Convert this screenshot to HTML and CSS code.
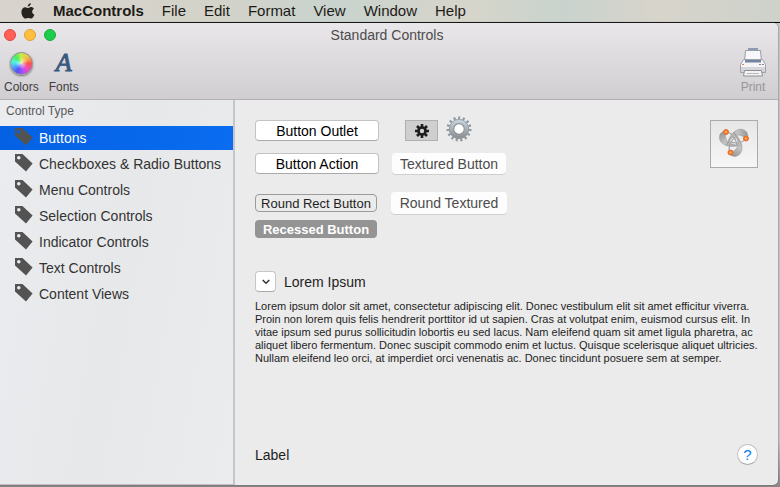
FILE: index.html
```html
<!DOCTYPE html>
<html lang="en">
<head>
    <meta charset="UTF-8">
    <meta name="viewport" content="width=device-width, initial-scale=1.0">
    <title>Standard Controls</title>
    <link rel="stylesheet" href="styles.css">
</head>
<body>
    <svg class="defs" width="0" height="0">
        <symbol id="tag" viewBox="0 0 18 18">
            <path fill-rule="evenodd" d="M0 0h7.5L17.6 9.6 11 17.6 0 7.6zM3.8 2a1.8 1.8 0 1 0 0 3.6 1.8 1.8 0 0 0 0-3.6z"/>
        </symbol>
    </svg>

    <nav class="menubar">
        <svg class="apple" width="14" height="16" viewBox="0 0 14 16">
            <path d="M9.8 0c.1 1.9-1.300 3.500-3 3.600C6.600 1.900 8.200.2 9.800 0zM9.900 4.100c1.300 0 2.400.7 3 1.600-2.500 1.500-2.100 4.900.5 5.900-.7 1.900-1.900 4-3.300 4-1.100 0-1.500-.7-2.800-.7s-1.800.7-2.800.7C2.500 15.600.4 12.200.4 9c0-3.100 1.900-4.800 3.900-4.800 1.200 0 2.200.8 3 .8.700 0 1.600-.9 2.600-.9z"/>
        </svg>
        <a class="menu app" href="#">MacControls</a>
        <a class="menu" href="#">File</a>
        <a class="menu" href="#">Edit</a>
        <a class="menu" href="#">Format</a>
        <a class="menu" href="#">View</a>
        <a class="menu" href="#">Window</a>
        <a class="menu" href="#">Help</a>
    </nav>

    <div class="window">
        <header class="toolbar">
            <div class="titlebar">
                <div class="lights">
                    <button class="light close" aria-label="Close"></button>
                    <button class="light minimize" aria-label="Minimize"></button>
                    <button class="light zoom" aria-label="Zoom"></button>
                </div>
                <h1>Standard Controls</h1>
            </div>
            <div class="tools">
                <button class="tool">
                    <span class="tool-icon"><span class="wheel"></span></span>
                    Colors
                </button>
                <button class="tool">
                    <span class="tool-icon letter">A</span>
                    Fonts
                </button>
                <button class="tool print" disabled>
                    <svg class="tool-icon" width="28" height="30" viewBox="0 0 28 30">
                        <path fill="#8d9cb3" d="M9 0h10v3H9z"/>
                        <path fill="#f7f8fb" stroke="#9a9ca4" d="M6.500 2.500h15l1 11h-17z"/>
                        <path fill="#f4f4f7" stroke="#a0a1a8" d="M4.500 11.500h19l3 5v8h-25v-8z"/>
                        <path fill="#7483a1" d="M6 12h16v2.500H6z"/>
                        <path fill="#d4d5da" d="M2 19h24v5H2z"/>
                        <path fill="#f3f3f6" stroke="#8f9097" d="M5.500 22.500h17l1 5.500h-19z"/>
                        <path stroke="#b8b9bf" d="M8 25.500h12"/>
                        <path stroke="#e07b66" d="M3 16.500h2"/>
                        <path stroke="#85868c" d="M20 16.500h5" stroke-dasharray="2 1"/>
                    </svg>
                    Print
                </button>
            </div>
        </header>

        <div class="body">
            <aside class="sidebar">
                <h2>Control Type</h2>
                <ul>
                    <li><a class="item selected" href="#"><svg class="tag"><use href="#tag"/></svg>Buttons</a></li>
                    <li><a class="item" href="#"><svg class="tag"><use href="#tag"/></svg>Checkboxes &amp; Radio Buttons</a></li>
                    <li><a class="item" href="#"><svg class="tag"><use href="#tag"/></svg>Menu Controls</a></li>
                    <li><a class="item" href="#"><svg class="tag"><use href="#tag"/></svg>Selection Controls</a></li>
                    <li><a class="item" href="#"><svg class="tag"><use href="#tag"/></svg>Indicator Controls</a></li>
                    <li><a class="item" href="#"><svg class="tag"><use href="#tag"/></svg>Text Controls</a></li>
                    <li><a class="item" href="#"><svg class="tag"><use href="#tag"/></svg>Content Views</a></li>
                </ul>
            </aside>

            <main class="content">
                <div class="top">
                    <div class="column">
                        <button class="push">Button Outlet</button>
                        <button class="push">Button Action</button>
                        <div class="small-buttons">
                            <button class="round-rect">Round Rect Button</button>
                            <button class="recessed">Recessed Button</button>
                        </div>
                    </div>
                    <div class="column second">
                        <div class="gears">
                            <button class="gradient" aria-label="Action">
                                <svg width="14" height="14" viewBox="-7 -7 14 14">
                                    <circle r="3.500" fill="none" stroke="#1c1c1c" stroke-width="2.600"/>
                                    <path stroke="#1c1c1c" stroke-width="2.600" d="M0-7v3M0 7V4M-7 0h3M7 0H4M-5-5l2 2M5 5L3 3M-5 5l2-2M5-5L3-3"/>
                                </svg>
                            </button>
                            <button class="image-button" aria-label="Settings">
                                <svg width="26" height="26" viewBox="-13 -13 26 26">
                                    <defs>
                                        <linearGradient id="steel" x1="0" y1="0" x2="0" y2="1">
                                            <stop offset="0" stop-color="#c3d0d8"/>
                                            <stop offset="1" stop-color="#909398"/>
                                        </linearGradient>
                                    </defs>
                                    <circle r="11" fill="none" stroke="#8d979e" stroke-width="3" stroke-dasharray="2 2.607"/>
                                    <circle r="7.500" fill="none" stroke="url(#steel)" stroke-width="5"/>
                                    <circle r="9.700" fill="none" stroke="#8d979e" stroke-width=".8"/>
                                    <circle r="5.300" fill="#fff" stroke="#8f959a" stroke-width="1.200"/>
                                </svg>
                            </button>
                        </div>
                        <button class="textured">Textured Button</button>
                        <button class="textured round">Round Textured</button>
                    </div>
                    <div class="well">
                        <svg width="32" height="32" viewBox="0 0 32 32">
                            <defs>
                                <linearGradient id="ring" x1="0" y1="0" x2="1" y2="1">
                                    <stop offset="0" stop-color="#8c8c8c"/>
                                    <stop offset=".5" stop-color="#c4c4c4"/>
                                    <stop offset="1" stop-color="#9c9c9c"/>
                                </linearGradient>
                                <g id="loop">
                                    <path fill="url(#ring)" stroke="#9b9b9b" stroke-width=".5" d="M8 3C1 3 0 10 3 14c3 4 11 6 21 3-10 .5-15.500-2-16-7C6.700 7 8 6 10 5z"/>
                                    <path fill="none" stroke="#a3a3a3" stroke-width="1.200" d="M8 4c5 0 9.500 5 11 13"/>
                                </g>
                            </defs>
                            <use href="#loop"/>
                            <use href="#loop" transform="rotate(120 16 13)"/>
                            <use href="#loop" transform="rotate(240 16 13)"/>
                            <g fill="#f47a2c" stroke="#e66b36">
                                <circle cx="8" cy="4" r="2.500"/>
                                <circle cx="28" cy="10.500" r="2.500"/>
                                <circle cx="12.500" cy="24.500" r="2.500"/>
                            </g>
                            <g fill="#ffc23c">
                                <circle cx="8" cy="4" r="1"/>
                                <circle cx="28" cy="10.500" r="1"/>
                                <circle cx="12.500" cy="24.500" r="1"/>
                            </g>
                        </svg>
                    </div>
                </div>

                <div class="disclosure">
                    <button class="disclose" id="disclose" aria-labelledby="lorem">
                        <svg width="8" height="6" viewBox="0 0 8 6"><path fill="none" stroke="#333" stroke-width="1.500" d="M.7 1L4 4.300 7.300 1"/></svg>
                    </button>
                    <label id="lorem" for="disclose">Lorem Ipsum</label>
                </div>
                <p class="lorem">Lorem ipsum dolor sit amet, consectetur adipiscing elit. Donec vestibulum elit sit amet efficitur viverra.<br>
                Proin non lorem quis felis hendrerit porttitor id ut sapien. Cras at volutpat enim, euismod cursus elit. In<br>
                vitae ipsum sed purus sollicitudin lobortis eu sed lacus. Nam eleifend quam sit amet ligula pharetra, ac<br>
                aliquet libero fermentum. Donec suscipit commodo enim et luctus. Quisque scelerisque aliquet ultricies.<br>
                Nullam eleifend leo orci, at imperdiet orci venenatis ac. Donec tincidunt posuere sem at semper.</p>

                <footer class="bottom">
                    <span>Label</span>
                    <button class="help">?</button>
                </footer>
            </main>
        </div>
    </div>
</body>
</html>
```
FILE: styles.css
```css
* {
    box-sizing: border-box;
}
body {
    display: flex;
    flex-direction: column;
    min-height: 100vh;
    margin: 0;
    background: linear-gradient(#c9c9c9 0, #c9c9c9 90%, #8a8789 100%);
    font-family: "Liberation Sans", Arial, sans-serif;
    font-size: 14px;
    color: #1e1e1e;
}
h1, h2, ul, p {
    margin: 0;
    padding: 0;
    font-weight: normal;
}
button {
    padding: 0;
    border: 0;
    background: none;
    font-family: inherit;
    font-size: 14px;
    color: inherit;
    white-space: nowrap;
}
.defs {
    position: absolute;
}

/* menu bar */
.menubar {
    display: flex;
    align-items: center;
    gap: 18px;
    height: 23px;
    padding: 0 21px;
    border-bottom: 1px solid #000;
    background: linear-gradient(90deg, #d8d3cd, #d3d3c9 28%, #c9d3ce 43%, #d7d5cb 60%, #c9d3cd 72%, #d7d4cb 84%, #ced2cb);
}
.apple {
    fill: #26221e;
}
.menu {
    font-size: 15px;
    line-height: 20px;
    color: #1d1b18;
    text-decoration: none;
}
.app {
    font-weight: bold;
}

/* window */
.window {
    display: flex;
    flex: 1;
    flex-direction: column;
    margin: 0 2px 2px 0;
    border-radius: 0 5px 5px 0;
    background: #ebebeb;
    box-shadow: 0 0 2px #555;
    overflow: hidden;
}
.toolbar {
    height: 77px;
    border-bottom: 1px solid #b1afb1;
    background: linear-gradient(#e9e7e9, #d0ced0);
}
.titlebar {
    display: grid;
    grid-template-columns: 1fr auto 1fr;
    align-items: center;
    height: 23px;
    padding: 0 8px 0 4px;
}
.titlebar h1 {
    font-size: 14px;
    color: #4d4b4d;
}
.lights {
    display: flex;
    gap: 8px;
}
.light {
    width: 12px;
    height: 12px;
    border: 1px solid #e0443e;
    border-radius: 50%;
    background: #ff5f57;
}
.minimize {
    border-color: #dea034;
    background: #ffbe3f;
}
.zoom {
    border-color: #18ac36;
    background: #1ecc4c;
}
.tools {
    display: flex;
    gap: 10px;
    padding: 0 11px 0 4px;
}
.tool {
    display: flex;
    flex-direction: column;
    align-items: center;
    font-size: 12px;
    line-height: 14px;
    color: #3f3d3f;
}
.tool-icon {
    display: flex;
    align-items: center;
    height: 34px;
}
.print {
    margin-left: auto;
    color: #98969a;
}
.wheel {
    width: 23px;
    height: 23px;
    border: 1px solid #8d8d95;
    border-radius: 50%;
    background: radial-gradient(#ffffffaa, transparent 40%), conic-gradient(#c8ee4a, #f8b54c 50deg, #f95252 90deg, #f34bb5 130deg, #b84dfa 165deg, #5453f5 210deg, #4fb0fa 250deg, #4df5dd 280deg, #4bed61 320deg, #c8ee4a);
    box-shadow: 0 1px 2px #777;
}
.letter {
    font-family: "Liberation Serif", "Times New Roman", serif;
    font-size: 26px;
    font-style: italic;
    -webkit-text-stroke: 1px #38597f;
    color: #38597f;
}

.body {
    display: flex;
    flex: 1;
}
.sidebar {
    flex: 0 0 235px;
    border-right: 2px solid #c6c6c9;
    border-bottom: 1px solid #c1c1c4;
    background: linear-gradient(100deg, #ebecef, #e7e8ea 50%, #ebecee);
}
.sidebar h2 {
    padding: 5px 6px 8px;
    font-size: 12px;
    line-height: 13px;
    color: #58585c;
}
.sidebar ul {
    display: flex;
    flex-direction: column;
    gap: 2px;
    list-style: none;
}
.item {
    display: flex;
    align-items: center;
    gap: 6px;
    height: 24px;
    padding-left: 15px;
    color: #333;
    text-decoration: none;
}
.selected {
    background: linear-gradient(90deg, #0461e4, #0a6cf0);
    color: #fff;
}
.tag {
    width: 18px;
    height: 18px;
    margin-bottom: 2px;
    fill: #535353;
}

/* controls */
.content {
    display: flex;
    flex: 1;
    flex-direction: column;
    min-width: 0;
    padding: 20px;
}
.top {
    display: flex;
    align-items: flex-start;
    gap: 12px;
}
.column {
    display: flex;
    flex-direction: column;
    gap: 12px;
}
.second {
    align-items: center;
}
.push {
    width: 124px;
    height: 21px;
    border: 1px solid #c3c3c3;
    border-bottom-color: #ababab;
    border-radius: 4px;
    background: #fff;
    color: #000;
}
.small-buttons {
    display: flex;
    flex-direction: column;
    align-items: flex-start;
    gap: 8px;
    padding-top: 8px;
}
.round-rect, .recessed {
    width: 122px;
    height: 18px;
    border-radius: 4px;
    font-size: 13px;
}
.round-rect {
    border: 1px solid #9b9b9b;
}
.recessed {
    background: #949494;
    font-weight: bold;
    color: #fff;
}
.gears {
    display: flex;
    align-self: flex-start;
    align-items: center;
    gap: 8px;
    height: 21px;
    padding-left: 14px;
}
.gradient {
    display: flex;
    align-items: center;
    justify-content: center;
    width: 33px;
    height: 21px;
    border: 1px solid #b0b0b0;
    background: #cfcfcf;
}
.image-button {
    display: flex;
    margin-bottom: 4px;
}
.textured {
    width: 114px;
    height: 21px;
    border-radius: 4px;
    background: #fdfdfd;
    box-shadow: 0 1px 0 #cfcfcf;
    color: #4c4c4c;
}
.round {
    width: 116px;
    height: 22px;
    margin-top: 6px;
}
.well {
    display: flex;
    align-items: center;
    justify-content: center;
    width: 48px;
    height: 48px;
    margin-left: auto;
    border: 1px solid #ababab;
    background: linear-gradient(#e7e7e7, #f6f6f6);
}
.disclosure {
    display: flex;
    align-items: center;
    gap: 8px;
    margin-top: 33px;
}
.disclose {
    display: flex;
    align-items: center;
    justify-content: center;
    width: 21px;
    height: 21px;
    border: 1px solid #c6c6c6;
    border-bottom-color: #aaa;
    border-radius: 4px;
    background: #fff;
}
.lorem {
    margin-top: 8px;
    font-size: 11px;
    line-height: 13px;
    white-space: nowrap;
}
.bottom {
    display: flex;
    align-items: center;
    justify-content: space-between;
    margin-top: auto;
}
.help {
    width: 21px;
    height: 21px;
    border: 1px solid #c0c0c0;
    border-bottom-color: #a6a6a6;
    border-radius: 50%;
    background: #fff;
    font-size: 15px;
    line-height: 19px;
    color: #0a7bf8;
}
```
